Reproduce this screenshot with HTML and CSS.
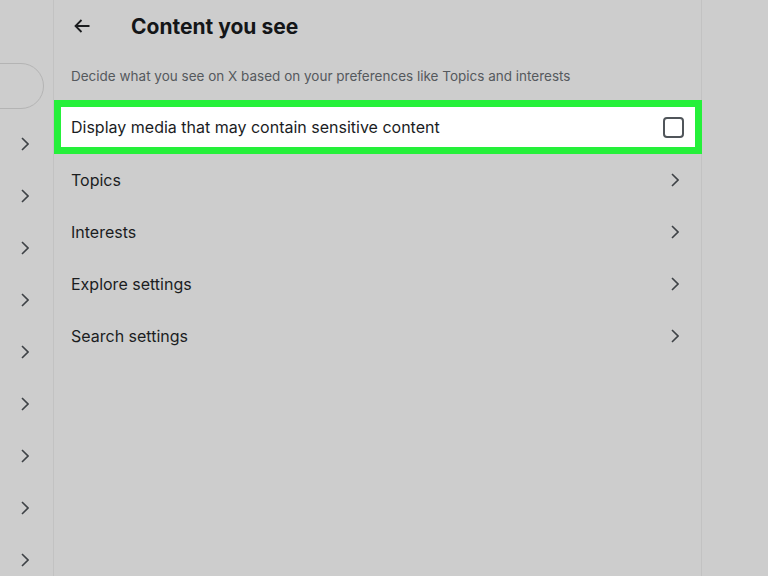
FILE: index.html
```html
<!DOCTYPE html>
<html lang="en">
<head>
    <meta charset="UTF-8">
    <meta name="viewport" content="width=device-width, initial-scale=1.0">
    <title>Content you see</title>
    <link rel="stylesheet" href="styles.css">
</head>
<body>
    <div id="page">
        <div id="nav-column">
            <div class="search-pill"></div>
            <div class="nav-list">
                <div class="nav-item"><svg class="chevron" viewBox="0 0 8 14"><path d="M1 1l6 6-6 6"/></svg></div>
                <div class="nav-item"><svg class="chevron" viewBox="0 0 8 14"><path d="M1 1l6 6-6 6"/></svg></div>
                <div class="nav-item"><svg class="chevron" viewBox="0 0 8 14"><path d="M1 1l6 6-6 6"/></svg></div>
                <div class="nav-item"><svg class="chevron" viewBox="0 0 8 14"><path d="M1 1l6 6-6 6"/></svg></div>
                <div class="nav-item"><svg class="chevron" viewBox="0 0 8 14"><path d="M1 1l6 6-6 6"/></svg></div>
                <div class="nav-item"><svg class="chevron" viewBox="0 0 8 14"><path d="M1 1l6 6-6 6"/></svg></div>
                <div class="nav-item"><svg class="chevron" viewBox="0 0 8 14"><path d="M1 1l6 6-6 6"/></svg></div>
                <div class="nav-item"><svg class="chevron" viewBox="0 0 8 14"><path d="M1 1l6 6-6 6"/></svg></div>
                <div class="nav-item"><svg class="chevron" viewBox="0 0 8 14"><path d="M1 1l6 6-6 6"/></svg></div>
            </div>
        </div>

        <div id="main-column">
            <div class="header">
                <svg class="back-arrow" viewBox="0 0 16 14"><path d="M15.5 7H1.5M7.5 1L1.5 7l6 6"/></svg>
                <h1>Content you see</h1>
            </div>
            <p class="subtitle">Decide what you see on X based on your preferences like Topics and interests</p>

            <div class="highlight">
                <div class="option-row">
                    <span>Display media that may contain sensitive content</span>
                    <span class="checkbox"></span>
                </div>
            </div>

            <div class="setting-row"><span>Topics</span><svg class="chevron" viewBox="0 0 8 14"><path d="M1 1l6 6-6 6"/></svg></div>
            <div class="setting-row"><span>Interests</span><svg class="chevron" viewBox="0 0 8 14"><path d="M1 1l6 6-6 6"/></svg></div>
            <div class="setting-row"><span>Explore settings</span><svg class="chevron" viewBox="0 0 8 14"><path d="M1 1l6 6-6 6"/></svg></div>
            <div class="setting-row"><span>Search settings</span><svg class="chevron" viewBox="0 0 8 14"><path d="M1 1l6 6-6 6"/></svg></div>
        </div>

        <div id="side-column"></div>
    </div>
</body>
</html>
```

FILE: styles.css
```css
body {
    margin: 0;
    padding: 0;
    background-color: #cdcdcd;
    font-family: Inter, "Noto Sans", sans-serif;
    color: #1b1d1f;
    overflow: hidden;
}
#page {
    display: grid;
    grid-template-columns: 53px 649px 1fr;
    height: 576px;
}
#nav-column {
    overflow: hidden;
}
.search-pill {
    margin: 63px 0 0 -60px;
    width: 102px;
    height: 44px;
    border: 1px solid #b4b4b4;
    border-radius: 23px;
}
.nav-list {
    margin-top: 9px;
}
.nav-item {
    height: 52px;
    display: flex;
    align-items: center;
    padding-left: 21px;
}
.chevron {
    width: 8px;
    height: 14px;
    fill: none;
    stroke: #3e4246;
    stroke-width: 1.6;
}
#main-column {
    border-left: 1px solid #c2c2c2;
    border-right: 1px solid #c2c2c2;
}
.header {
    height: 52px;
    display: flex;
    align-items: center;
    padding-left: 20px;
}
.back-arrow {
    width: 16px;
    height: 14px;
    fill: none;
    stroke: #1b1d1f;
    stroke-width: 1.8;
    margin-right: 41px;
}
.header h1 {
    margin: 0;
    font-size: 21px;
    font-weight: 700;
    color: #141618;
}
.subtitle {
    margin: 0;
    padding: 14px 17px;
    font-size: 13.5px;
    line-height: 20px;
    color: #55595d;
}
.highlight {
    border: 7px solid #25f03a;
    margin-right: -1px;
}
.option-row {
    height: 40px;
    background-color: #fff;
    display: flex;
    align-items: center;
    justify-content: space-between;
    padding: 0 11px 0 10px;
    font-size: 16px;
    line-height: 38px;
}
.checkbox {
    width: 17px;
    height: 17px;
    border: 2px solid #50555a;
    border-radius: 4px;
}
.setting-row {
    height: 52px;
    display: flex;
    align-items: center;
    justify-content: space-between;
    padding: 0 22px 0 17px;
    font-size: 16px;
}
```
